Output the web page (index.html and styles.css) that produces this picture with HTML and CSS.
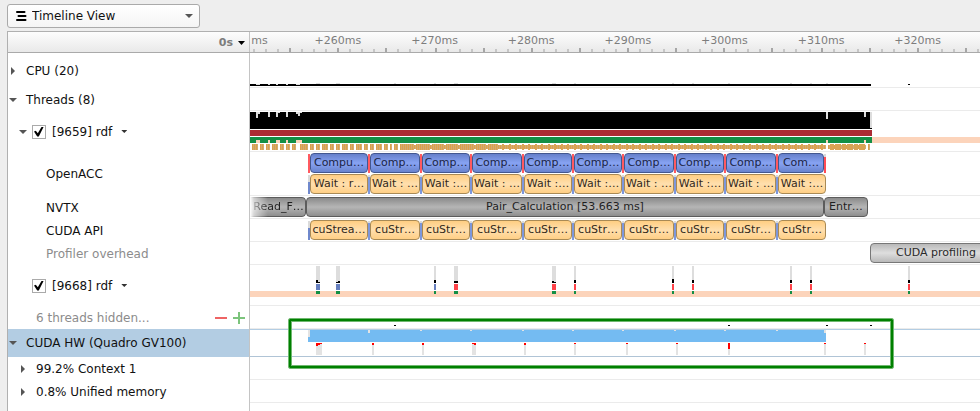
FILE: index.html
```html
<!DOCTYPE html>
<html lang="en">
<head>
<meta charset="utf-8">
<title>Timeline View</title>
<link rel="stylesheet" href="styles.css">
</head>
<body>
<header class="toolbar">
  <div class="view-picker">
    <svg class="view-icon" width="11" height="10" viewBox="0 0 11 10" aria-hidden="true"><path d="M1 1h7.500M2.500 5h7M1 9h8.500" fill="none" stroke="#000" stroke-width="2" stroke-linecap="round"/></svg>
    <select aria-label="View"><option>Timeline View</option></select>
    <svg class="view-arrow" width="8" height="4" viewBox="0 0 8 4" aria-hidden="true"><path d="M0 0h8L4 4z" fill="#555"/></svg>
  </div>
</header>
<main class="timeline">
  <div class="row ruler">
    <div class="name"><button class="origin" type="button">0s<svg width="7" height="4" viewBox="0 0 7 4" aria-hidden="true"><path d="M0 0h7L3.500 4z" fill="#000"/></svg></button></div>
    <div class="track">
      <div class="scale"><span class="partial">ms</span><span>+260ms</span><span>+270ms</span><span>+280ms</span><span>+290ms</span><span>+300ms</span><span>+310ms</span><span>+320ms</span></div>
      <svg class="ticks" height="4" shape-rendering="crispEdges" aria-hidden="true">
        <path d="M3 2.500H173M185 2.500H549M559 2.500H3000" stroke="#c6c6c6" stroke-width="3" stroke-dasharray="2 10" fill="none"/>
        <path d="M39 2H139M185 2H525M571 2H3000" stroke="#a6a6a6" stroke-width="4" stroke-dasharray="2 46" fill="none"/>
      </svg>
    </div>
  </div>

  <div class="row cpu">
    <div class="name level-1"><button class="toggle closed" type="button" aria-label="Expand CPU"></button><span>CPU (20)</span></div>
    <div class="track"><svg class="plot" shape-rendering="crispEdges" aria-hidden="true">
      <path fill="#000" d="M0 31h621v2H0zM658 31h2v1h-2z"/>
      <path fill="#ddd" d="M6 31h4v1H6zM18 31h2v1h-2zM26 31h2v1h-2zM36 31h2v1h-2zM46 31h4v1h-4zM66 30h4v1h-4zM86 30h4v1h-4zM144 30h2v1h-2zM184 30h2v1h-2zM204 30h4v1h-4zM302 30h4v1h-4zM324 30h2v1h-2zM422 30h2v1h-2zM442 30h2v1h-2zM478 30h2v1h-2zM540 30h2v1h-2zM560 30h2v1h-2zM576 30h2v1h-2z"/>
    </svg></div>
  </div>

  <div class="row">
    <div class="name level-1"><button class="toggle open" type="button" aria-label="Collapse Threads"></button><span>Threads (8)</span></div>
    <div class="track"></div>
  </div>

  <div class="row thread">
    <div class="name level-2"><button class="toggle open" type="button" aria-label="Collapse thread 9659"></button><input type="checkbox" id="t9659" checked><label for="t9659">[9659] rdf</label><button class="more" type="button" aria-label="Thread 9659 options"></button></div>
    <div class="track"><svg class="plot" shape-rendering="crispEdges" aria-hidden="true">
      <defs><pattern id="samples" width="2" height="8" patternUnits="userSpaceOnUse"><path fill="#dca04a" d="M0 0h1v8H0z"/><path fill="#d0ac74" d="M1 0h1v8H1z"/></pattern></defs>
      <path fill="#000" d="M0 1h622v17H0z"/>
      <path fill="#ddd" d="M6 1h4v2H8v4H6zM18 1h2v5h-2zM26 1h4v1h-2v4h-2zM36 1h2v5h-2zM46 1h6v1h-2v3h-2V3h-2zM576 1h2v7h-2zM614 1h2v5h-2zM620 1h2v16h-2z"/>
      <path fill="#ac2b33" d="M0 19h622v6H0z"/>
      <path fill="#138f45" d="M0 26h622v6H0z"/>
      <path fill="#fcd4bb" d="M622 26h2400v6H622zM6 29h4v3H6zM18 29h2v3h-2zM26 29h4v3h-4zM36 29h2v3h-2zM46 29h6v3h-6zM576 29h2v3h-2zM614 29h2v3h-2z"/>
      <path fill="url(#samples)" d="M2 33h6v6H2zM10 33h4v6h-4zM16 33h4v6h-4zM22 33h6v6h-6zM30 33h4v6h-4zM36 33h4v6h-4zM42 33h4v6h-4zM50 33h8v6h-8zM60 33h4v6h-4zM66 33h4v6h-4zM72 33h6v6h-6zM80 33h4v6h-4zM86 33h4v6h-4zM92 33h6v6h-6zM100 33h4v6h-4zM106 33h6v6h-6zM114 33h4v6h-4zM120 33h4v6h-4zM126 33h6v6h-6zM134 33h4v6h-4zM140 33h2v6h-2zM144 33h4v6h-4zM150 33h14v6h-14zM166 33h14v6h-14zM182 33h12v6h-12zM196 33h12v6h-12zM210 33h14v6h-14zM226 33h10v6h-10zM238 33h10v6h-10zM150 34h426v4H150zM578 34h38v4h-38zM618 33h2v6h-2z"/>
      <path stroke="#d9a355" stroke-width="6" stroke-dasharray="2 5 2 4" fill="none" d="M252 36H576"/>
      <path stroke="#d9a355" stroke-width="6" stroke-dasharray="4 1 6 1" fill="none" d="M580 36H616"/>
    </svg></div>
  </div>

  <div class="row">
    <div class="name level-3"><span>OpenACC</span></div>
    <div class="track lanes">
      <div class="lane from-first">
        <i class="launch"></i><span class="bar compute" style="width:58px">Compu…</span>
        <i class="launch"></i><span class="bar compute" style="width:50px">Comp…</span>
        <i class="launch"></i><span class="bar compute" style="width:48px">Comp…</span>
        <i class="launch"></i><span class="bar compute" style="width:50px">Comp…</span>
        <i class="launch"></i><span class="bar compute" style="width:48px">Comp…</span>
        <i class="launch"></i><span class="bar compute" style="width:48px">Comp…</span>
        <i class="launch"></i><span class="bar compute" style="width:50px">Comp…</span>
        <i class="launch"></i><span class="bar compute" style="width:48px">Comp…</span>
        <i class="launch"></i><span class="bar compute" style="width:50px">Comp…</span>
        <i class="launch"></i><span class="bar compute" style="width:46px">Com…</span>
        <i class="launch"></i>
      </div>
      <div class="lane from-first">
        <i class="enqueue"></i><span class="bar wait" style="width:58px">Wait : r…</span>
        <i class="enqueue"></i><span class="bar wait" style="width:50px">Wait : …</span>
        <i class="enqueue"></i><span class="bar wait" style="width:48px">Wait :…</span>
        <i class="enqueue"></i><span class="bar wait" style="width:50px">Wait : …</span>
        <i class="enqueue"></i><span class="bar wait" style="width:48px">Wait :…</span>
        <i class="enqueue"></i><span class="bar wait" style="width:48px">Wait :…</span>
        <i class="enqueue"></i><span class="bar wait" style="width:50px">Wait : …</span>
        <i class="enqueue"></i><span class="bar wait" style="width:48px">Wait :…</span>
        <i class="enqueue"></i><span class="bar wait" style="width:50px">Wait : …</span>
        <i class="enqueue"></i><span class="bar wait" style="width:48px">Wait :…</span>
      </div>
    </div>
  </div>

  <div class="row">
    <div class="name level-3"><span>NVTX</span></div>
    <div class="track lanes">
      <div class="lane"><span class="bar range cut" style="width:56px">Read_F…</span><span class="bar range" style="width:518px">Pair_Calculation [53.663 ms]</span><span class="bar range" style="width:44px">Entr…</span></div>
    </div>
  </div>

  <div class="row">
    <div class="name level-3"><span>CUDA API</span></div>
    <div class="track lanes">
      <div class="lane from-first">
        <i class="enqueue"></i><span class="bar wait" style="width:58px">cuStrea…</span>
        <i class="enqueue"></i><span class="bar wait" style="width:50px">cuStr…</span>
        <i class="enqueue"></i><span class="bar wait" style="width:48px">cuStr…</span>
        <i class="enqueue"></i><span class="bar wait" style="width:50px">cuStr…</span>
        <i class="enqueue"></i><span class="bar wait" style="width:48px">cuStr…</span>
        <i class="enqueue"></i><span class="bar wait" style="width:48px">cuStr…</span>
        <i class="enqueue"></i><span class="bar wait" style="width:50px">cuStr…</span>
        <i class="enqueue"></i><span class="bar wait" style="width:48px">cuStr…</span>
        <i class="enqueue"></i><span class="bar wait" style="width:50px">cuStr…</span>
        <i class="enqueue"></i><span class="bar wait" style="width:48px">cuStr…</span>
      </div>
    </div>
  </div>

  <div class="row">
    <div class="name level-3 muted"><span>Profiler overhead</span></div>
    <div class="track lanes">
      <div class="lane from-profiling"><span class="bar overhead" style="width:132px">CUDA profiling</span></div>
    </div>
  </div>

  <div class="row thread">
    <div class="name level-2"><span class="toggle"></span><input type="checkbox" id="t9668" checked><label for="t9668">[9668] rdf</label><button class="more" type="button" aria-label="Thread 9668 options"></button></div>
    <div class="track"><svg class="plot" shape-rendering="crispEdges" aria-hidden="true">
      <path fill="#fcd4bb" d="M0 26h3000v6H0z"/>
      <path fill="#ddd" d="M66 1h4v17h-4zM86 1h4v17h-4zM184 1h2v17h-2zM204 1h4v17h-4zM302 1h4v17h-4zM324 1h2v17h-2zM422 1h2v17h-2zM442 1h2v17h-2zM540 1h2v17h-2zM560 1h2v17h-2zM658 1h2v17h-2z"/>
      <path fill="#000" d="M66 15h2v2h2v1h-4zM86 17h2v-1h2v2h-4zM184 15h2v3h-2zM204 16h4v2h-4zM302 16h2v1h2v1h-4zM324 15h2v3h-2zM422 14h2v4h-2zM442 15h2v3h-2zM540 15h2v3h-2zM560 15h2v3h-2zM658 15h2v3h-2z"/>
      <path fill="#667fbe" d="M66 19h4v6h-4zM86 19h4v6h-4zM184 19h2v6h-2z"/>
      <path fill="#ff4349" d="M204 19h4v6h-4zM302 19h4v6h-4zM324 19h2v6h-2zM422 19h2v6h-2zM442 19h2v6h-2zM540 19h2v6h-2zM560 19h2v6h-2zM658 19h2v6h-2z"/>
      <path fill="#138f45" d="M66 26h4v3h-4zM86 26h4v3h-4zM184 26h2v3h-2zM204 26h4v3h-4zM302 26h4v3h-4zM324 26h2v3h-2zM422 26h2v3h-2zM442 26h2v3h-2zM540 26h2v3h-2zM560 26h2v3h-2zM658 26h2v3h-2z"/>
    </svg></div>
  </div>

  <div class="row">
    <div class="name level-2 muted"><span class="toggle"></span><span>6 threads hidden...</span>
      <span class="count-buttons">
        <button type="button" aria-label="Show fewer threads"><svg width="12" height="12" viewBox="0 0 12 12"><path d="M0 6h12" stroke="#ee6464" stroke-width="2"/></svg></button>
        <button type="button" aria-label="Show more threads"><svg width="12" height="12" viewBox="0 0 12 12"><path d="M0 6h12M6 0v12" stroke="#7cc47c" stroke-width="2"/></svg></button>
      </span>
    </div>
    <div class="track"><svg class="plot" shape-rendering="crispEdges" aria-hidden="true"><path fill="#000" d="M144 19h2v1h-2zM478 19h2v1h-2zM576 19h2v1h-2zM620 19h2v1h-2z"/></svg></div>
  </div>

  <div class="row selected">
    <div class="name level-1"><button class="toggle open" type="button" aria-label="Collapse CUDA HW"></button><span>CUDA HW (Quadro GV100)</span></div>
    <div class="track">
      <svg class="plot" shape-rendering="crispEdges" aria-hidden="true">
        <path fill="#74bbf2" d="M58 0h518v12H58z"/>
        <path fill="#e3e3e3" d="M58 0h2v7h-2zM118 0h2v3h-2zM170 0h2v1h-2zM220 0h2v1h-2zM272 0h2v1h-2zM322 0h2v1h-2zM372 0h2v1h-2zM424 0h2v1h-2zM474 0h2v1h-2zM526 0h2v1h-2zM574 0h2v3h-2zM66 13h6v12h-6zM122 13h2v12h-2zM172 13h2v12h-2zM222 13h4v12h-4zM274 13h2v12h-2zM324 13h2v12h-2zM376 13h2v12h-2zM426 13h2v12h-2zM478 13h2v12h-2zM574 13h2v12h-2zM614 13h2v12h-2z"/>
        <path fill="#f00" d="M66 13h6v1h-2v1h-2v1h-2zM122 13h2v2h-2zM172 13h2v2h-2zM222 13h4v2h-2v-1h-2zM274 13h2v2h-2zM324 13h2v1h-2zM376 13h2v1h-2zM426 13h2v1h-2zM478 13h2v6h-2zM574 13h2v1h-2zM614 13h2v1h-2z"/>
      </svg>
      <div class="highlight"></div>
    </div>
  </div>

  <div class="row">
    <div class="name level-2"><button class="toggle closed" type="button" aria-label="Expand Context 1"></button><span>99.2% Context 1</span></div>
    <div class="track"></div>
  </div>
  <div class="row">
    <div class="name level-2"><button class="toggle closed" type="button" aria-label="Expand Unified memory"></button><span>0.8% Unified memory</span></div>
    <div class="track"></div>
  </div>
  <div class="row rest"><div class="name"></div><div class="track"></div></div>
</main>
</body>
</html>
```
FILE: styles.css
```css
* { box-sizing: border-box; }

body {
  margin: 0;
  min-height: 100vh;
  display: flex;
  flex-direction: column;
  background: #eee;
  color: #111;
  font: 12px/16px "DejaVu Sans", sans-serif;
  overflow: hidden;
}

button {
  padding: 0;
  border: 0;
  background: none;
  font: inherit;
  color: inherit;
}

svg { display: block; }

.toolbar { padding: 4px 7px 3px; }

.view-picker {
  position: relative;
  width: 193px;
  height: 24px;
  border: 1px solid #aaa;
  border-radius: 3px;
  background: linear-gradient(#fff, #f4f4f4);
}

.view-picker select {
  appearance: none;
  width: 100%;
  height: 100%;
  margin: 0;
  padding: 0 24px;
  border: 0;
  background: none;
  color: #111;
  font: inherit;
}

.view-icon {
  position: absolute;
  left: 8px;
  top: 6px;
}

.view-arrow {
  position: absolute;
  right: 6px;
  top: 9px;
}

.timeline {
  flex: 1;
  display: flex;
  flex-direction: column;
  margin-left: 7px;
  border: solid #b0b0b0;
  border-width: 1px 0 0 1px;
  background: #fff;
}

.row {
  display: flex;
  min-height: 23px;
}

.row.cpu { min-height: 35px; }
.row.thread { min-height: 41px; }
.row.rest { flex: 1; min-height: 0; }

.name {
  flex: 0 0 242px;
  display: flex;
  align-items: center;
  border-right: 1px solid #c4c4c4;
  white-space: nowrap;
}

.level-1 { padding-left: 1px; }
.level-2 { padding-left: 11px; }
.level-3 { padding-left: 38px; }
.muted { color: #8c8c8c; }

.track {
  position: relative;
  flex: 1;
  min-width: 0;
  overflow: hidden;
  border-bottom: 1px solid #ebebeb;
}

.rest .track { border-bottom: 0; }

.plot {
  position: absolute;
  inset: 0;
  width: 100%;
  height: 100%;
}

/* Ruler */
.row.ruler {
  min-height: 21px;
  background: linear-gradient(#fdfdfd, #e9e9e9);
  border-bottom: 1px solid #aaa;
  color: #7d7d7d;
  font-size: 11px;
}

.ruler .name {
  justify-content: flex-end;
  padding-top: 2px;
}

.ruler .track { border-bottom: 0; }

.origin {
  display: flex;
  align-items: center;
  gap: 5px;
  margin-right: 4px;
  font-weight: bold;
}

.scale {
  display: grid;
  grid-template-columns: repeat(8, 1fr);
  width: 773px;
  margin-left: -57px;
  padding-top: 1px;
  text-align: center;
}

.scale .partial {
  padding-right: 22px;
  text-align: right;
}

.ticks {
  position: absolute;
  left: 0;
  bottom: 0;
  width: 100%;
}

/* Row names */
.toggle {
  display: flex;
  flex: 0 0 8px;
  height: 8px;
  margin-right: 9px;
  align-items: center;
  justify-content: center;
}

.level-2 .toggle + input { margin-left: -4px; }

.toggle.open::before {
  content: "";
  border: solid transparent;
  border-width: 4px 4px 0;
  border-top-color: #555;
}

.toggle.closed::before {
  content: "";
  border: solid transparent;
  border-width: 4px 0 4px 4px;
  border-left-color: #555;
}

input[type="checkbox"] {
  appearance: none;
  width: 14px;
  height: 14px;
  margin: 0 6px 0 0;
  border: 1px solid #aaa;
  background: #fff;
}

input[type="checkbox"]:checked::before {
  content: "";
  display: block;
  width: 10px;
  height: 10px;
  margin: 1px;
  background: #000;
  clip-path: polygon(0 50%, 18% 42%, 38% 68%, 78% 0, 98% 0, 48% 100%, 32% 100%);
}

.more {
  width: 6px;
  height: 3px;
  margin-left: 9px;
  background: #333;
  clip-path: polygon(0 0, 100% 0, 50% 100%);
}

.count-buttons {
  display: flex;
  gap: 6px;
  margin-left: auto;
  margin-right: 4px;
}

/* Event lanes */
.lanes {
  display: flex;
  flex-direction: column;
  gap: 1px;
  padding: 1px 0;
}

.lane {
  display: flex;
  height: 20px;
}

.from-first { padding-left: 58px; }
.from-profiling { padding-left: 620px; }

.bar {
  flex: none;
  overflow: hidden;
  border: 1px solid;
  border-radius: 4px;
  font-size: 11px;
  line-height: 17px;
  text-align: center;
  white-space: nowrap;
}

.compute {
  border-color: #43578f;
  background: linear-gradient(#6680ca, #87a3f3 50%, #6983cd);
  color: #1c2545;
}

.wait {
  border-color: #a98a55;
  background: linear-gradient(#ffce82, #ffdfae 50%, #ffcf85);
  color: #33291a;
}

.range {
  border-color: #5c5c5c;
  background: linear-gradient(#8b8b8b, #b5b5b5 50%, #8e8e8e);
  color: #1f1f1f;
}

.range.cut {
  padding-left: 2px;
  border-left: 0;
  border-radius: 0 4px 4px 0;
  -webkit-mask-image: linear-gradient(90deg, transparent, #0006 4px, #000 18px);
  mask-image: linear-gradient(90deg, transparent, #0006 4px, #000 18px);
}

.overhead {
  border-color: #777;
  background: linear-gradient(#b9b9b9, #dedede 50%, #b9b9b9);
  color: #2a2a2a;
}

.launch,
.enqueue {
  flex: 0 0 2px;
  margin-top: 1px;
  background: #ff5a60;
}

.enqueue { background: linear-gradient(#dadada 2px, #7d97dc 2px); }
.enqueue:first-child { background: linear-gradient(#dadada 7px, #6f88cc 7px); }
.launch:last-child { background: linear-gradient(#dadada 3px, #ff4c55 3px); }

/* Selected row */
.row.selected { min-height: 28px; }
.selected .name { background: #b3cde3; }

.selected .track {
  overflow: visible;
  border-top: 1px solid #b3cde3;
  border-bottom-color: #b0c4d6;
}

.highlight {
  position: absolute;
  left: 38px;
  top: -12px;
  z-index: 1;
  width: 606px;
  height: 51px;
  border: 1px solid #70b870;
  border-radius: 2px;
  box-shadow: inset 0 0 0 2px #008000, inset 0 0 0 3px #70b870;
}
```
